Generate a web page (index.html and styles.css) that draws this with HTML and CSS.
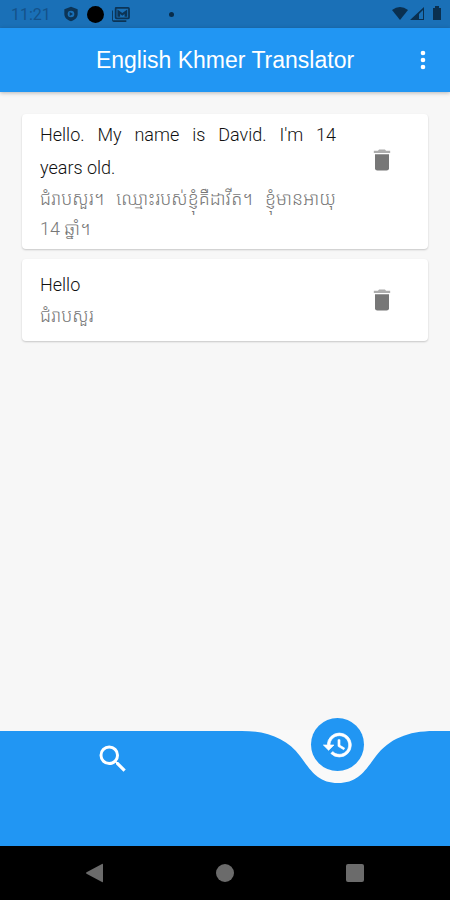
FILE: index.html
```html
<!DOCTYPE html>
<html lang="en">
<head>
<meta charset="utf-8">
<meta name="viewport" content="width=device-width, initial-scale=1">
<title>English Khmer Translator</title>
<link rel="stylesheet" href="styles.css">
</head>
<body>
<div class="status">
  <span class="clock">11:21</span>
  <svg class="status-icon" viewBox="0 0 24 24" aria-hidden="true"><path fill-rule="evenodd" d="M12 1 2 5v7c0 5 4 9 10 11 6-2 10-6 10-11V5zM12 7a5 5 0 1 1 0 10 5 5 0 0 1 0-10zM10 9v6l5-3z"/></svg>
  <span class="record"></span>
  <svg class="status-icon mail" viewBox="0 0 20 18" aria-hidden="true"><path fill-rule="evenodd" d="M4 1h14q2 0 2 2v10q0 2-2 2H5q-2 0-2-2V3q0-2 1-2zm1 2v10h13V3zM0 5h1v11h15v2H2q-2 0-2-2z"/><path d="M6 12V4l5.500 4L17 4v8h-3V9l-2.500 2L9 9v3z"/></svg>
  <span class="dot"></span>
  <span class="spacer"></span>
  <svg class="signal" viewBox="0 0 50 16" aria-hidden="true"><path d="M0 4q8-6 16 0L8 14z"/><path fill-rule="evenodd" d="M18 14 32 1v13zm9-1h4V4l-4 4z"/><path d="M41 2h2V0h4v2h2v12h-8z"/></svg>
</div>
<header class="appbar">
  <h1>English Khmer Translator</h1>
  <button class="more" aria-label="More options"><svg viewBox="0 0 24 24"><path d="M12 8a2 2 0 1 0 0-4 2 2 0 0 0 0 4zm0 2a2 2 0 1 0 0 4 2 2 0 0 0 0-4zm0 6a2 2 0 1 0 0 4 2 2 0 0 0 0-4z"/></svg></button>
</header>
<main class="history">
  <article class="card">
    <div class="copy">
      <p class="source">Hello. My name is David. I'm 14 <span class="keep">years old.</span></p>
      <p class="khmer" lang="km">ជំរាបសួរ។ ឈ្មោះរបស់ខ្ញុំគឺដាវីត។ ខ្ញុំមានអាយុ <span class="keep">14 ឆ្នាំ។</span></p>
    </div>
    <button class="delete" aria-label="Delete"><svg viewBox="0 0 24 24"><path opacity=".6" d="M5 4h3.500l1-1h5l1 1H19v2H5z"/><path d="M6 7h12v12a2 2 0 0 1-2 2H8a2 2 0 0 1-2-2z"/></svg></button>
  </article>
  <article class="card">
    <div class="copy">
      <p class="source">Hello</p>
      <p class="khmer" lang="km">ជំរាបសួរ</p>
    </div>
    <button class="delete" aria-label="Delete"><svg viewBox="0 0 24 24"><path opacity=".6" d="M5 4h3.500l1-1h5l1 1H19v2H5z"/><path d="M6 7h12v12a2 2 0 0 1-2 2H8a2 2 0 0 1-2-2z"/></svg></button>
  </article>
</main>
<nav class="tabs">
  <div class="tab">
    <button class="search" aria-label="Search"><svg viewBox="0 0 24 24"><path d="M15.500 14h-.79l-.28-.27A6.471 6.471 0 0 0 16 9.500 6.500 6.500 0 1 0 9.500 16c1.610 0 3.090-.59 4.230-1.570l.27.28v.79l5 4.990L20.490 19l-4.990-5zm-6 0C7.010 14 5 11.990 5 9.500S7.010 5 9.500 5 14 7.010 14 9.500 11.990 14 9.500 14z"/></svg></button>
  </div>
  <div class="tab current">
    <svg class="notch" viewBox="0 0 192 54" aria-hidden="true"><path d="M0 0v1C26 1 45 9 58 26C69 41 76 53 96 53S123 41 134 26C147 9 166 1 192 1V0z"/></svg>
    <button class="recent" aria-label="History"><svg viewBox="0 0 24 24"><path stroke="currentColor" stroke-width=".5" d="M13 3a9 9 0 0 0-9 9H1l3.890 3.890.07.14L9 12H6c0-3.870 3.130-7 7-7s7 3.130 7 7-3.130 7-7 7c-1.930 0-3.680-.79-4.940-2.060l-1.420 1.420A8.954 8.954 0 0 0 13 21a9 9 0 0 0 0-18zm-1 5v5l4.280 2.540.72-1.210-3.500-2.080V8z"/></svg></button>
  </div>
</nav>
<footer class="system">
  <button aria-label="Back"><svg viewBox="0 0 20 20"><path d="M2 9 17 1q1-1 1 1v16q0 2-1 1L2 11q-2-1 0-2z"/></svg></button>
  <button aria-label="Home"><svg viewBox="0 0 20 20"><circle cx="10" cy="10" r="9"/></svg></button>
  <button aria-label="Overview"><svg viewBox="0 0 20 20"><rect x="1" y="1" width="18" height="18" rx="2"/></svg></button>
</footer>
</body>
</html>
```

FILE: styles.css
```css
* { box-sizing: border-box; }
body {
  margin: 0;
  min-height: 100vh;
  display: flex;
  flex-direction: column;
  background: #f7f7f7;
  font-family: "Liberation Sans", "Noto Sans Khmer", "Khmer OS", sans-serif;
}
h1, p { margin: 0; }
svg { display: block; fill: currentColor; }
button {
  display: grid;
  place-items: center;
  padding: 0;
  border: 0;
  background: none;
  color: inherit;
}
.status {
  display: flex;
  align-items: center;
  height: 28px;
  padding: 0 8px 0 11px;
  background: #1a70b7;
  color: #0c3456;
}
.clock { width: 52px; font: 16px Roboto, sans-serif; color: #14528a; }
.status-icon { width: 16px; height: 16px; }
.record { width: 17px; height: 17px; margin: 0 8px; border-radius: 50%; background: #000; }
.mail { width: 18px; }
.dot { width: 5px; height: 5px; margin-left: 39px; border-radius: 50%; background: #082c4a; }
.spacer { flex: 1; }
.signal { width: 50px; height: 16px; color: #0a3050; }
.appbar {
  display: grid;
  grid-template-columns: 54px 1fr 54px;
  align-items: center;
  height: 64px;
  background: #2196f3;
  color: #fff;
  box-shadow: 0 1px 4px #0004;
}
.appbar h1 {
  grid-column: 2;
  font-size: 23px;
  font-weight: 400;
  text-align: center;
  white-space: nowrap;
}
.more { height: 54px; }
.more svg { width: 28px; height: 28px; }
.history {
  flex: 1;
  display: flex;
  flex-direction: column;
  gap: 10px;
  padding: 22px;
}
.card {
  display: grid;
  grid-template-columns: 1fr 92px;
  align-items: center;
  min-height: 82px;
  padding: 4px 0 5px 18px;
  border-radius: 4px;
  background: #fff;
  box-shadow: 0 1px 2px #0003;
}
.source {
  font-family: Roboto, sans-serif;
  font-weight: 300;
  font-size: 18px;
  line-height: 33px;
  color: #111;
  text-align: justify;
}
.khmer {
  font-family: Roboto, "Noto Sans Khmer", "Khmer OS", sans-serif;
  font-weight: 300;
  font-size: 18px;
  line-height: 30px;
  color: #777;
  text-align: justify;
}
.keep { white-space: nowrap; }
.delete {
  align-self: start;
  height: 100%;
  max-height: 84px;
  color: #777;
}
.delete svg { width: 28px; height: 28px; }
.tabs {
  display: grid;
  grid-template-columns: 1fr 1fr;
  height: 115px;
  background: #2196f3;
  color: #fff;
}
.tab { position: relative; display: flex; justify-content: center; align-items: flex-start; }
.search { width: 56px; height: 56px; }
.search svg { width: 36px; height: 36px; }
.notch {
  position: absolute;
  top: -1px;
  left: 50%;
  width: 192px;
  height: 54px;
  margin-left: -96px;
  color: #f9f9f9;
}
.recent {
  position: absolute;
  top: -13px;
  width: 53px;
  height: 53px;
  border-radius: 50%;
  background: #2196f3;
}
.recent svg { width: 32px; height: 32px; }
.system {
  display: flex;
  justify-content: space-between;
  align-items: center;
  height: 54px;
  padding: 0 68px;
  background: #000;
  color: #6b6b6b;
}
.system button { width: 54px; height: 54px; }
.system svg { width: 20px; height: 20px; }
```
